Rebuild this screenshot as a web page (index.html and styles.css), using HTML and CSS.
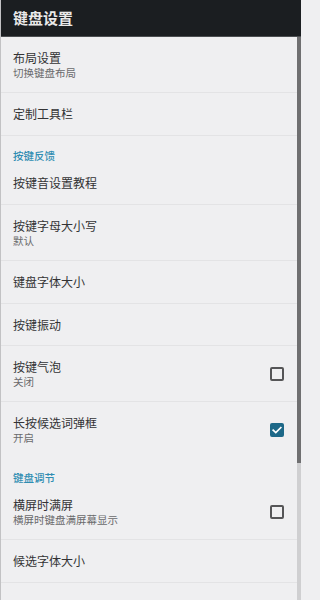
FILE: index.html
```html
<!DOCTYPE html>
<html lang="zh">
<head>
<meta charset="utf-8">
<title>键盘设置</title>
<link rel="stylesheet" href="styles.css">
</head>
<body>
<div class="screen">
  <header class="appbar"><h1 class="appbar-title">键盘设置</h1></header>
  <ul class="list">
    <li class="pref double"><div class="texts"><div class="title">布局设置</div><div class="summary">切换键盘布局</div></div></li>
    <li class="pref single"><div class="texts"><div class="title">定制工具栏</div></div></li>
    <li class="section">按键反馈</li>
    <li class="pref single"><div class="texts"><div class="title">按键音设置教程</div></div></li>
    <li class="pref double"><div class="texts"><div class="title">按键字母大小写</div><div class="summary">默认</div></div></li>
    <li class="pref single"><div class="texts"><div class="title">键盘字体大小</div></div></li>
    <li class="pref single short"><div class="texts"><div class="title">按键振动</div></div></li>
    <li class="pref double"><div class="texts"><div class="title">按键气泡</div><div class="summary">关闭</div></div><span class="check"></span></li>
    <li class="pref double nodiv"><div class="texts"><div class="title">长按候选词弹框</div><div class="summary">开启</div></div><span class="check on"><svg viewBox="0 0 14 14" width="14" height="14"><polyline points="3.2,7.2 5.8,9.6 10.8,4.6" fill="none" stroke="#ffffff" stroke-width="1.7" stroke-linecap="square"/></svg></span></li>
    <li class="section">键盘调节</li>
    <li class="pref double"><div class="texts"><div class="title">横屏时满屏</div><div class="summary">横屏时键盘满屏幕显示</div></div><span class="check"></span></li>
    <li class="pref single"><div class="texts"><div class="title">候选字体大小</div></div></li>
    <li class="pref double cut"><div class="texts"><div class="title">候选词显示行数</div><div class="summary">默认</div></div></li>
  </ul>
  <div class="scroll-track"><div class="scroll-thumb"></div></div>
</div>
</body>
</html>
```
FILE: styles.css
```css
* { box-sizing: border-box; }
html, body { margin: 0; padding: 0; }
body {
  font-family: "Noto Sans CJK SC", "Noto Sans", sans-serif;
  background: #efeff1;
}
.screen {
  position: relative;
  width: 301px;
  height: 600px;
  overflow: hidden;
  background: #efeff1;
  border-left: 1px solid #c2c2c4;
}
.appbar {
  height: 37px;
  background: #1b1e21;
  border-bottom: 1px solid #4b4e51;
  display: flex;
  align-items: center;
  padding-left: 12px;
}
.appbar-title {
  margin: 0;
  font-size: 15px;
  line-height: 18px;
  font-weight: 700;
  color: #e9e9e9;
}
.list {
  list-style: none;
  margin: 0;
  padding: 0;
}
.pref {
  display: flex;
  align-items: center;
  justify-content: space-between;
  padding: 0 17px 0 12px;
  border-bottom: 1px solid #e3e3e5;
}
.pref.nodiv { border-bottom-color: transparent; }
.pref.single { height: 43px; }
.pref.short { height: 42px; }
.pref.double { height: 56px; }
.pref.cut { padding-top: 8px; }
.texts { display: flex; flex-direction: column; }
.title {
  font-size: 12px;
  line-height: 16px;
  color: #333335;
}
.summary {
  font-size: 10.5px;
  line-height: 14px;
  color: #6a6a6c;
}
.section {
  height: 26px;
  padding: 14px 0 0 12px;
  font-size: 10.5px;
  line-height: 12px;
  font-weight: 500;
  color: #2f8db2;
}
.check {
  width: 14px;
  height: 14px;
  border: 2px solid #555557;
  border-radius: 2px;
  flex-shrink: 0;
  display: flex;
}
.check.on {
  background: #1d6888;
  border-color: #1d6888;
  align-items: center;
  justify-content: center;
}
.check.on svg { flex-shrink: 0; margin: -2px; }
.scroll-track {
  position: absolute;
  top: 37px;
  right: 0;
  bottom: 0;
  width: 4px;
  background: #cfcfd1;
}
.scroll-thumb {
  height: 426px;
  background: #6f6f71;
}
```
